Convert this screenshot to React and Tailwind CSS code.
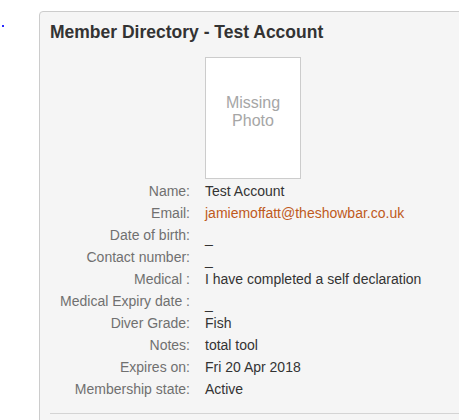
export default function App() {
  const rows = [
    ["Name:", "Test Account"],
    ["Email:", "jamiemoffatt@theshowbar.co.uk", "email"],
    ["Date of birth:", "_"],
    ["Contact number:", "_"],
    ["Medical :", "I have completed a self declaration"],
    ["Medical Expiry date :", "_"],
    ["Diver Grade:", "Fish"],
    ["Notes:", "total tool"],
    ["Expires on:", "Fri 20 Apr 2018"],
    ["Membership state:", "Active"],
  ];

  return (
    <div
      className="relative min-h-[420px] bg-white overflow-hidden"
      style={{ fontFamily: '"Liberation Sans", Arial, sans-serif' }}
    >
      <span className="absolute left-[2px] top-[25px] w-[2px] h-[2px] bg-[#2b2bff]" />
      <div className="pt-[11px] pl-[39px]">
        <div className="w-[440px] bg-[#f5f5f5] border border-[#cccccc] rounded-[4px] px-[10px] pt-[10px] pb-[20px]">
          <h2 className="text-[17.5px] leading-[20px] font-bold text-[#333333]">
            Member Directory - Test Account
          </h2>
          <div className="mt-[15px] ml-[155px] w-[96px] h-[122px] bg-white border border-[#cccccc] pt-[36px] text-center text-[16px] leading-[18px] text-[#a6a6a6]">
            Missing
            <br />
            Photo
          </div>
          <div className="mt-px grid grid-cols-[140px_1fr] gap-x-[15px] text-[14px] leading-[22px]">
            {rows.map(([label, value, kind]) => (
              <div key={label} className="contents">
                <div className="text-right text-[#707070] whitespace-nowrap">{label}</div>
                <div
                  className={
                    kind === "email"
                      ? "text-[#bf5a1c] whitespace-nowrap"
                      : "text-[#333333] whitespace-nowrap"
                  }
                >
                  {value === "_" ? <span className="relative top-[3px]">_</span> : value}
                </div>
              </div>
            ))}
          </div>
          <div className="mt-[13px] border-t border-[#d4d4d4]" />
        </div>
      </div>
    </div>
  );
}
